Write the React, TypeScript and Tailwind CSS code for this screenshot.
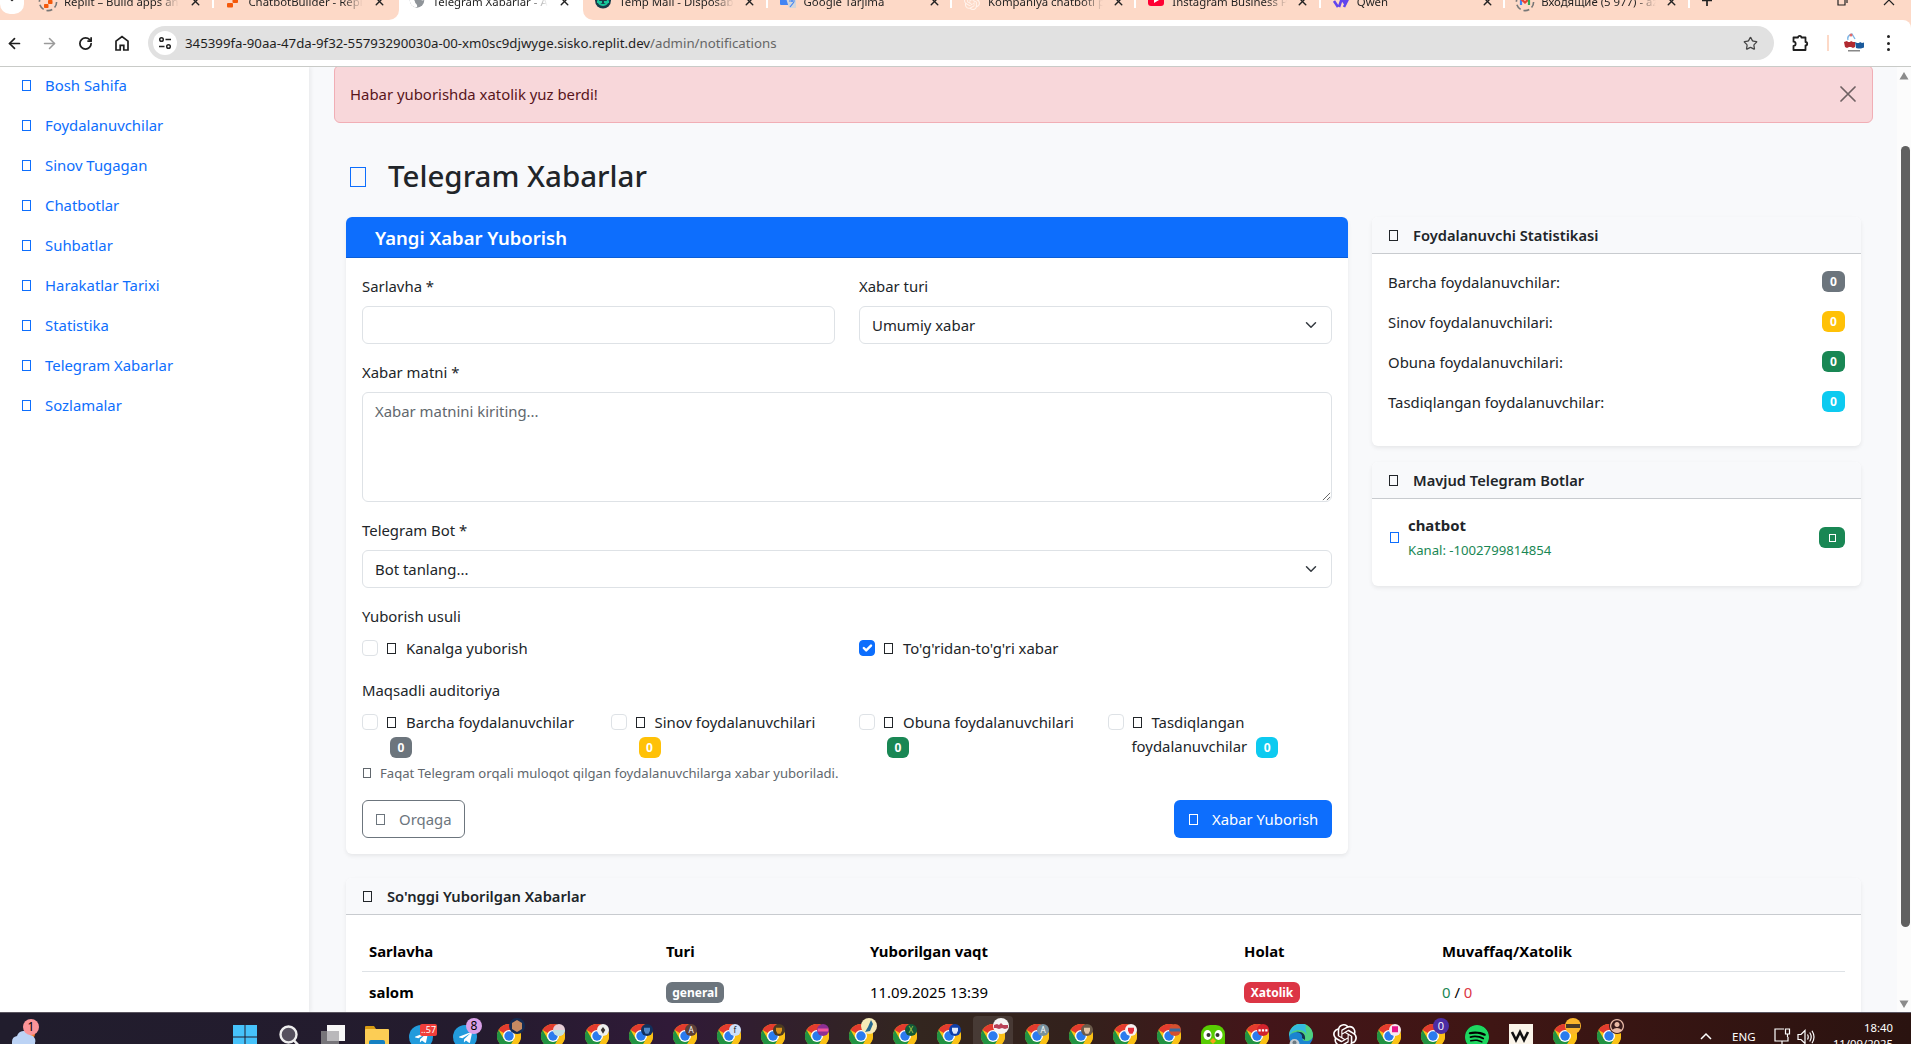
import React from 'react';
import { ArrowLeft, ArrowRight, Star, ChevronDown, RotateCw, X } from 'lucide-react';
import { SiOpenai, SiSpotify } from 'react-icons/si';
import { FaTelegramPlane } from 'react-icons/fa';

/* ---------- small shared pieces ---------- */

function Glyph({ className = '' }: { className?: string }) {
  return <span className={`inline-block h-[11px] w-[9px] shrink-0 border border-current ${className}`} />;
}

function Badge({ className = '', children }: { className?: string; children: React.ReactNode }) {
  return (
    <span
      className={`inline-flex h-[21px] items-center justify-center rounded-[6px] pt-[1px] text-[12px] leading-[12px] font-bold text-white ${className}`}
    >
      {children}
    </span>
  );
}

/* ---------- browser chrome ---------- */

function Ring({ children, color = '#777' }: { children?: React.ReactNode; color?: string }) {
  return (
    <svg viewBox="0 0 20 20" className="h-5 w-5 shrink-0">
      <circle cx="10" cy="10" r="8.6" fill="none" stroke={color} strokeWidth="1.6" strokeDasharray="6 3" />
      {children}
    </svg>
  );
}

const replitMark = (
  <g fill="#f4590b">
    <rect x="6" y="4" width="4.5" height="4" rx="0.8" />
    <rect x="10" y="8" width="4.5" height="4" rx="0.8" />
    <rect x="6" y="12" width="4.5" height="4" rx="0.8" />
  </g>
);

const favicons: Record<string, React.ReactNode> = {
  replitRing: <Ring>{replitMark}</Ring>,
  replit: (
    <svg viewBox="0 0 20 20" className="h-5 w-5">
      <g fill="#f4590b">
        <rect x="5" y="2" width="6" height="4.500" rx="1" />
        <rect x="10.500" y="6.500" width="5.500" height="4.500" rx="1" />
        <rect x="5" y="11" width="6" height="4.500" rx="1" />
      </g>
    </svg>
  ),
  globe: (
    <svg viewBox="0 0 20 20" className="h-5 w-5">
      <circle cx="10" cy="8.500" r="7.2" fill="#8f9499" />
      <path d="M3 7c3 0 5 1 5 3s3 2 2 5c-4 1-8-3-7-8zM11 2c3 0 6 3 6 6-2 1-3 0-4-1s-3-2-2-5z" fill="#fff" />
    </svg>
  ),
  temp: (
    <svg viewBox="0 0 20 20" className="h-5 w-5">
      <circle cx="10" cy="8.500" r="8" fill="#173c4a" />
      <path d="M5 6c0 5 2 7 5 7s5-2 5-7M4 10h5M11 10h5" fill="none" stroke="#17c79a" strokeWidth="1.8" />
    </svg>
  ),
  translate: (
    <svg viewBox="0 0 20 20" className="h-5 w-5">
      <rect x="2" y="0" width="11" height="13" rx="1" fill="#4285f4" />
      <path d="M8 6h10v10h-7z" fill="#d2d6dc" />
      <path d="M11 9h6M14 8v2M12 15l4-5" stroke="#4285f4" strokeWidth="1.2" />
    </svg>
  ),
  gpt: <SiOpenai className="h-4 w-4 text-[#fff3ec]" />,
  youtube: (
    <svg viewBox="0 0 20 20" className="h-5 w-5">
      <rect x="2" y="2" width="16" height="12" rx="3" fill="#ff0033" />
      <path d="M8 5l5 3-5 3z" fill="#fff" />
    </svg>
  ),
  qwen: (
    <svg viewBox="0 0 20 20" className="h-5 w-5">
      <path d="M4 5h6l3 5 4-3M3 9l4 6M8 15l2-6h6l-3 6" fill="none" stroke="#6045ee" strokeWidth="2.6" />
    </svg>
  ),
  gmail: (
    <Ring>
      <path d="M6 13V6.500" stroke="#4285f4" strokeWidth="2.2" />
      <path d="M6 7l4 3.500L14 7" fill="none" stroke="#ea4335" strokeWidth="2.2" />
      <path d="M14 13V6.500" stroke="#34a853" strokeWidth="2.2" />
    </Ring>
  ),
};

const tabs = [
  { icon: 'replitRing', title: 'Replit – Build apps and sites' },
  { icon: 'replit', title: 'ChatbotBuilder - Replit' },
  { icon: 'globe', title: 'Telegram Xabarlar - Admin', active: true },
  { icon: 'temp', title: 'Temp Mail - Disposable' },
  { icon: 'translate', title: 'Google Tarjima' },
  { icon: 'gpt', title: 'Kompaniya chatboti pro' },
  { icon: 'youtube', title: 'Instagram Business Page' },
  { icon: 'qwen', title: 'Qwen' },
  { icon: 'gmail', title: 'Входящие (5 977) - az@g' },
];

function TabStrip() {
  return (
    <div className="flex h-5 shrink-0 overflow-hidden bg-white">
      <div className="flex h-5 w-[30px] shrink-0 items-start bg-[#fdd9c7]">
        <div className="flex h-[14px] w-[24px] justify-center rounded-b-[10px] bg-white">
          <ChevronDown className="-mt-[7px] h-[12px] w-[12px] text-[#222]" strokeWidth={3} />
        </div>
      </div>
      {tabs.map((t, i) => (
        <div
          key={t.title}
          className={`h-5 w-[184.400px] shrink-0 ${
            t.active ? 'bg-white' : i === 1 ? 'rounded-br-[10px] bg-[#fdd9c7]' : i === 3 ? 'rounded-bl-[10px] bg-[#fdd9c7]' : 'bg-[#fdd9c7]'
          }`}
        >
          <div className="-mt-[8px] flex h-5 items-center">
            <span className={`flex h-5 w-5 items-center justify-center ${i > 2 ? 'ml-[10px]' : 'ml-[8px]'}`}>
              {favicons[t.icon]}
            </span>
            <span className="ml-[6px] w-[115px] overflow-hidden bg-[linear-gradient(90deg,#1f1f1f_82%,transparent)] bg-clip-text text-[11.400px] leading-5 whitespace-nowrap text-transparent">
              {t.title}
            </span>
            <X
              className={`-mt-[1px] h-[13px] w-[13px] text-[#222] ${i > 2 ? 'ml-[9px]' : 'ml-[10px]'}`}
              strokeWidth={2.6}
            />
            <span className={`ml-auto h-[12px] w-[2px] ${i === 1 || i === 2 ? 'bg-transparent' : 'bg-white'}`} />
          </div>
        </div>
      ))}
      <div className="flex h-5 flex-1 items-start justify-between bg-[#fdd9c7]">
        <svg viewBox="0 0 12 12" className="-mt-[5px] ml-[11px] h-3 w-3">
          <path d="M6 0v11M1 5.500h10" stroke="#222" strokeWidth="1.700" />
        </svg>
        <div className="flex">
          <svg viewBox="0 0 12 12" className="-mt-[6px] mr-[35px] h-3 w-3">
            <path d="M2 2h7v9H2zM4 1h7v8" fill="none" stroke="#222" strokeWidth="1.200" />
          </svg>
          <svg viewBox="0 0 12 12" className="-mt-[6px] mr-[16px] h-3 w-3">
            <path d="M1 1l10 10M11 1L1 11" stroke="#222" strokeWidth="1.200" />
          </svg>
        </div>
      </div>
    </div>
  );
}

function Toolbar() {
  return (
    <div className="bg-[#fdd9c7]">
      <div className="flex h-[47px] items-center rounded-tr-[8px] border-b border-[#c9cbc8] bg-white">
        <ArrowLeft className="ml-[6px] h-[17px] w-[17px] text-[#1f1f1f]" strokeWidth={2.4} />
        <ArrowRight className="ml-[18px] h-[17px] w-[17px] text-[#9a9a9a]" strokeWidth={2.2} />
        <RotateCw className="ml-[20px] h-[15px] w-[15px] text-[#1f1f1f]" strokeWidth={2.8} />
        <svg viewBox="0 0 16 16" className="ml-[21px] h-[16px] w-[16px]">
          <path d="M2 6.200L8 1.500l6 4.700V15h-4.200v-4.600H6.200V15H2z" fill="none" stroke="#1f1f1f" strokeWidth="1.700" />
        </svg>
        <div className="ml-[18px] flex h-[34px] w-[1626px] items-center rounded-full bg-[#e1e1e1]">
          <span className="ml-[5px] flex h-6 w-6 items-center justify-center rounded-full bg-white">
            <svg viewBox="0 0 14 14" className="h-[14px] w-[14px]" fill="none" stroke="#222" strokeWidth="1.500">
              <circle cx="3.500" cy="3.500" r="1.800" />
              <path d="M7.500 3.500H13M1 10.500h5.500" />
              <circle cx="10.500" cy="10.500" r="1.800" />
            </svg>
          </span>
          <span className="ml-[8px] text-[13.250px] leading-5 whitespace-nowrap text-[#1f1f1f]">
            345399fa-90aa-47da-9f32-55793290030a-00-xm0sc9djwyge.sisko.replit.dev
            <span className="text-[#666]">/admin/notifications</span>
          </span>
          <Star className="mr-[16px] ml-auto h-[15px] w-[15px] text-[#444]" strokeWidth={2} />
        </div>
        <svg viewBox="0 0 18 18" className="ml-[17px] h-[18px] w-[18px]">
          <path
            d="M2.500 3.500H7a1.700 1.700 0 0 1 3.400 0H14.500V8a1.700 1.700 0 0 1 0 3.400V16H2.500v-4a2.100 2.100 0 0 0 0-4.300z"
            fill="none"
            stroke="#1f1f1f"
            strokeWidth="1.800"
            strokeLinejoin="round"
          />
        </svg>
        <span className="ml-[18px] h-[16px] w-[2px] bg-[#fdd9c7]" />
        <svg viewBox="0 0 22 22" className="ml-[14px] h-[22px] w-[22px]">
          <path d="M5 8c-1-3 1-5 4-6l3 5" fill="none" stroke="#7db7e8" strokeWidth="1.400" />
          <circle cx="8" cy="3" r="1.500" fill="#e36b6b" />
          <path d="M1 10l3-1 1 1h2l1-1 2 1h2v5l-2 1-2-1H6l-2 1-2-1z" fill="#b02a30" />
          <path d="M12 10l2 1h2l1-1 2 1 2-.5v5l-3 1h-3l-2-.5z" fill="#1b5a9c" />
          <rect x="5" y="18" width="12" height="1.500" fill="#888" />
        </svg>
        <span className="ml-[22px] flex flex-col gap-[3.500px]">
          <span className="h-[3px] w-[3px] rounded-full bg-[#222]" />
          <span className="h-[3px] w-[3px] rounded-full bg-[#222]" />
          <span className="h-[3px] w-[3px] rounded-full bg-[#222]" />
        </span>
      </div>
    </div>
  );
}

/* ---------- page ---------- */

const navItems = [
  'Bosh Sahifa',
  'Foydalanuvchilar',
  'Sinov Tugagan',
  'Chatbotlar',
  'Suhbatlar',
  'Harakatlar Tarixi',
  'Statistika',
  'Telegram Xabarlar',
  'Sozlamalar',
];

function Sidebar() {
  return (
    <nav className="z-10 w-[309px] shrink-0 bg-white shadow-[2px_0_4px_rgba(0,0,0,0.06)]">
      <ul className="-mt-[2px]">
        {navItems.map((n) => (
          <li key={n} className="flex h-10 items-center text-[#0d6efd]">
            <Glyph className="ml-[22px]" />
            <span className="ml-[14px]">{n}</span>
          </li>
        ))}
      </ul>
    </nav>
  );
}

function Select({ value }: { value: string }) {
  return (
    <div className="flex h-[38px] items-center justify-between rounded-[6px] border border-[#dee2e6] px-3">
      <span>{value}</span>
      <svg viewBox="0 0 16 16" className="h-3 w-4">
        <path d="m2 5 6 6 6-6" fill="none" stroke="#343a40" strokeWidth="2" strokeLinecap="round" strokeLinejoin="round" />
      </svg>
    </div>
  );
}

function Check({ checked, children }: { checked?: boolean; children: React.ReactNode }) {
  return (
    <div className="mb-[2px] flex items-start">
      <span
        className={`mt-1 flex h-4 w-4 shrink-0 items-center justify-center rounded-[4px] border ${
          checked ? 'border-[#0d6efd] bg-[#0d6efd]' : 'border-[#dee2e6] bg-white'
        }`}
      >
        {checked && (
          <svg viewBox="0 0 20 20" className="h-4 w-4 shrink-0">
            <path d="m6 10 3 3 6-6" fill="none" stroke="#fff" strokeWidth="3" strokeLinecap="round" strokeLinejoin="round" />
          </svg>
        )}
      </span>
      <div className="ml-2 flex h-6 items-center whitespace-nowrap">
        <Glyph className="mr-[10px] ml-[1px]" />
        {children}
      </div>
    </div>
  );
}

function Audience({ title, rest, color }: { title: string; rest?: string; color: string }) {
  return (
    <div className="mb-[2px] flex items-start">
      <span className="mt-1 h-4 w-4 shrink-0 rounded-[4px] border border-[#dee2e6]" />
      <div className="ml-2 whitespace-nowrap">
        <div className="flex h-6 items-center">
          <Glyph className="ml-[1px]" />
          <span className="ml-[10px]">{title}</span>
        </div>
        <div className="flex h-6 items-center">
          {rest && <span className="mr-[5px]">{rest}</span>}
          <Badge className={`mt-[3px] ml-1 w-[22px] ${color}`}>0</Badge>
        </div>
      </div>
    </div>
  );
}

function FormCard() {
  return (
    <section className="w-[1002px] rounded-[6px] bg-white shadow-[0_2px_4px_rgba(0,0,0,0.075)]">
      <header className="flex h-[41px] items-center rounded-t-[6px] border-b border-[#0b5ed7] bg-[#0d6efd] pt-[1px] pl-[29px] text-[18.500px] font-semibold text-white">
        Yangi Xabar Yuborish
      </header>
      <div className="p-4">
        <div className="grid grid-cols-2 gap-6">
          <div>
            <div className="mb-2">Sarlavha *</div>
            <div className="h-[38px] rounded-[6px] border border-[#dee2e6]" />
          </div>
          <div>
            <div className="mb-2">Xabar turi</div>
            <Select value="Umumiy xabar" />
          </div>
        </div>
        <div className="mt-4 mb-2">Xabar matni *</div>
        <div className="flex h-[110px] items-start justify-between rounded-[6px] border border-[#dee2e6] pl-3">
          <span className="mt-[6px] text-[#61676d]">Xabar matnini kiriting...</span>
          <svg viewBox="0 0 10 10" className="h-[9px] w-[9px] self-end">
            <path d="M1 9l8-8M5.500 9L9 5.500" stroke="#555" strokeWidth="1" />
          </svg>
        </div>
        <div className="mt-4 mb-2">Telegram Bot *</div>
        <Select value="Bot tanlang..." />
        <div className="mt-4 mb-2">Yuborish usuli</div>
        <div className="grid grid-cols-2 gap-6">
          <Check>Kanalga yuborish</Check>
          <Check checked>To'g'ridan-to'g'ri xabar</Check>
        </div>
        <div className="mt-4 mb-2">Maqsadli auditoriya</div>
        <div className="grid grid-cols-4 gap-x-6">
          <Audience title="Barcha foydalanuvchilar" color="bg-[#6c757d]" />
          <Audience title="Sinov foydalanuvchilari" color="bg-[#ffc107]" />
          <Audience title="Obuna foydalanuvchilari" color="bg-[#198754]" />
          <Audience title="Tasdiqlangan" rest="foydalanuvchilar" color="bg-[#0dcaf0]" />
        </div>
        <div className="mt-[2px] mb-[17px] flex h-[21px] items-center text-[13.100px] text-[#61676d]">
          <Glyph className="ml-[1px] h-[10px]! w-[8px]!" />
          <span className="ml-[9px]">Faqat Telegram orqali muloqot qilgan foydalanuvchilarga xabar yuboriladi.</span>
        </div>
        <div className="flex justify-between">
          <button className="flex h-[38px] w-[103px] items-center rounded-[6px] border border-[#6c757d] text-[#6c757d]">
            <Glyph className="ml-[13px]" />
            <span className="ml-[14px]">Orqaga</span>
          </button>
          <button className="flex h-[38px] w-[158px] items-center rounded-[6px] bg-[#0d6efd] text-white">
            <Glyph className="ml-[15px]" />
            <span className="ml-[14px]">Xabar Yuborish</span>
          </button>
        </div>
      </div>
    </section>
  );
}

function CardHeader({ children }: { children: React.ReactNode }) {
  return (
    <header className="flex h-[37px] items-center rounded-t-[6px] border-b border-[#c8cbcf] bg-[#f8f9fb] pl-[17px] text-[14.700px] font-semibold">
      <Glyph />
      <span className="ml-[15px]">{children}</span>
    </header>
  );
}

const stats = [
  { label: 'Barcha foydalanuvchilar:', color: 'bg-[#6c757d]' },
  { label: 'Sinov foydalanuvchilari:', color: 'bg-[#ffc107]' },
  { label: 'Obuna foydalanuvchilari:', color: 'bg-[#198754]' },
  { label: 'Tasdiqlangan foydalanuvchilar:', color: 'bg-[#0dcaf0]' },
];

function SideCards() {
  return (
    <aside className="flex w-[489px] flex-col gap-4">
      <section className="h-[229px] rounded-[6px] bg-white shadow-[0_2px_4px_rgba(0,0,0,0.075)]">
        <CardHeader>Foydalanuvchi Statistikasi</CardHeader>
        <div className="flex flex-col gap-4 px-4 pt-4">
          {stats.map((s) => (
            <div key={s.label} className="flex h-6 items-center justify-between">
              <span>{s.label}</span>
              <Badge className={`-mt-[1px] w-[23px] ${s.color}`}>0</Badge>
            </div>
          ))}
        </div>
      </section>
      <section className="h-[124px] rounded-[6px] bg-white shadow-[0_2px_4px_rgba(0,0,0,0.075)]">
        <CardHeader>Mavjud Telegram Botlar</CardHeader>
        <div className="flex h-[79px] items-center px-4 pb-[2px]">
          <Glyph className="ml-[2px] text-[#0d6efd]" />
          <div className="ml-[9px]">
            <div className="font-bold">chatbot</div>
            <div className="pt-[1px] text-[13.150px] leading-6 text-[#198754]">Kanal: -1002799814854</div>
          </div>
          <Badge className="ml-auto w-[26px] bg-[#198754]">
            <span className="h-[8px] w-[7px] border border-white" />
          </Badge>
        </div>
      </section>
    </aside>
  );
}

function HistoryCard() {
  return (
    <section className="mt-6 h-[200px] rounded-[6px] bg-white shadow-[0_2px_4px_rgba(0,0,0,0.075)]">
      <CardHeader>So'nggi Yuborilgan Xabarlar</CardHeader>
      <div className="p-4">
        <div className="grid h-[41px] grid-cols-[297px_204px_374px_198px_1fr] items-center border-b border-[#dee2e6] pl-[7px] font-bold text-black">
          <span>Sarlavha</span>
          <span>Turi</span>
          <span>Yuborilgan vaqt</span>
          <span>Holat</span>
          <span>Muvaffaq/Xatolik</span>
        </div>
        <div className="grid h-[40px] grid-cols-[297px_204px_374px_198px_1fr] items-center pl-[7px] text-black">
          <span className="font-bold">salom</span>
          <span className="flex pt-[1px]">
            <Badge className="w-[58px] bg-[#6c757d]">general</Badge>
          </span>
          <span>11.09.2025 13:39</span>
          <span className="flex pt-[1px]">
            <Badge className="w-[56px] bg-[#dc3545]">Xatolik</Badge>
          </span>
          <span>
            <span className="text-[#198754]">0</span> / <span className="text-[#dc3545]">0</span>
          </span>
        </div>
      </div>
    </section>
  );
}

function Scrollbar() {
  return (
    <div className="flex w-[14px] shrink-0 flex-col items-end bg-[#fcfcfc]">
      <svg viewBox="0 0 10 8" className="mt-[5px] mr-[2px] h-[8px] w-[10px]">
        <path d="M5 0l4.500 7.500h-9z" fill="#8b8b8b" />
      </svg>
      <div className="mt-[66px] mr-[1px] h-[781px] w-[9px] rounded-[5px] bg-[#606060]" />
      <svg viewBox="0 0 10 8" className="mt-auto mr-[2px] mb-[4px] h-[8px] w-[10px]">
        <path d="M5 8L.5.500h9z" fill="#8b8b8b" />
      </svg>
    </div>
  );
}

/* ---------- taskbar ---------- */

function Chrome() {
  return (
    <svg viewBox="0 0 24 24" className="h-6 w-6">
      <circle cx="12" cy="12" r="12" fill="#fbc116" />
      <path d="M12 12L1.600 6A12 12 0 0 1 22.400 6z" fill="#e33b2e" />
      <path d="M1.600 6A12 12 0 0 0 12 24l5.200-9L12 12 6.800 15z" fill="#229342" />
      <path d="M12 6h10.400A12 12 0 0 1 12 24l5.200-9z" fill="#fbc116" />
      <circle cx="12" cy="12" r="6" fill="#fff" />
      <circle cx="12" cy="12" r="4.700" fill="#2b7bee" />
    </svg>
  );
}

type Overlay = { fill: string; text?: string; color?: string; big?: boolean; mark?: string; markFill?: string };

function ChromeItem({ overlay, active }: { overlay?: Overlay; active?: boolean }) {
  return (
    <div className={`relative flex h-9 w-10 justify-center rounded-t-[4px] pt-[8px] ${active ? 'bg-white/10' : ''}`}>
      <Chrome />
      {overlay && (
        <svg
          viewBox="0 0 16 16"
          className={overlay.big ? 'absolute top-[2px] left-[20px] h-4 w-4' : 'absolute top-[8px] left-[20px] h-3 w-3'}
        >
          <circle cx="8" cy="8" r="8" fill={overlay.fill} />
          {overlay.mark && <path d={overlay.mark} fill={overlay.markFill} />}
          {overlay.text && (
            <text
              x="8"
              y="12"
              textAnchor="middle"
              fontSize="11"
              fontFamily='"Open Sans", sans-serif'
              fill={overlay.color || '#fff'}
            >
              {overlay.text}
            </text>
          )}
        </svg>
      )}
    </div>
  );
}

const bird = 'M10 2l2 4-3 7-5 1 3-5z';
const face = 'M4 5h8v4l-2 4H6l-2-4z';
const stripe = 'M1 6h14v4H1z';

const firstChromes: (Overlay & { active?: boolean })[] = [
  { fill: '#152b52', big: true, mark: 'M8 2l5 3v6l-5 3-5-3V5z', markFill: '#c58a62' },
  { fill: '#e6cdd6', mark: 'M0 8h16a8 8 0 0 1-16 0z', markFill: '#bfe0e2' },
  { fill: '#efefee', mark: 'M8 4l3 4-3 5-3-5z', markFill: '#3a3230' },
  { fill: '#12305c', mark: face, markFill: '#4f86c4' },
  { fill: '#5d4037', text: 'A' },
  { fill: '#cfe0fb', text: 'f', color: '#111' },
  { fill: '#4a3a22', mark: face, markFill: '#d5901c' },
  { fill: '#8d2f93', mark: stripe, markFill: '#f0559b' },
  { fill: '#f6ebb8', big: true, mark: bird, markFill: '#256a92' },
  { fill: '#115a37', text: 'X', color: '#b5d44c' },
  { fill: '#0e3fa8', mark: face, markFill: '#dce7fa' },
  {
    fill: '#f5f5f5',
    big: true,
    mark: 'M1 7l3-1 2 1 2-2 2 2h5v3l-3 1-3-1-3 1-3-1H1z',
    markFill: '#b94258',
    active: true,
  },
  { fill: '#78909c', text: 'A' },
  { fill: '#6b5b4b', mark: face, markFill: '#e0c3a4' },
  { fill: '#f6f1f1', mark: face, markFill: '#e32e3b' },
  { fill: '#d3502f', mark: stripe, markFill: '#3a6a9c' },
];

function Taskbar() {
  return (
    <footer className="flex h-8 shrink-0 items-start overflow-hidden border-t border-[#5a5560] bg-[linear-gradient(90deg,#211d2d_0%,#241b2e_25%,#301a38_35%,#33261f_48%,#33211c_56%,#431519_66%,#3f1614_78%,#2a1310_100%)] pt-[3px] text-white">
      <div className="relative ml-[12px] h-9 w-[30px]">
        <svg viewBox="0 0 28 20" className="mt-[12px] h-5 w-7">
          <circle cx="18" cy="6" r="5" fill="#f37b26" />
          <path d="M0 14a6 6 0 0 1 5-6 7 7 0 0 1 13-1 6 6 0 0 1 5 8v5H0z" fill="#bcd3f5" />
        </svg>
        <span className="absolute top-[3px] left-[11px] flex h-4 w-4 items-center justify-center rounded-full bg-[#fb9498] text-[12px] leading-4 text-black">
          1
        </span>
      </div>
      <div className="ml-[183px] flex gap-1">
        <div className="flex h-9 w-10 justify-center pt-[9px]">
          <svg viewBox="0 0 24 24" className="h-6 w-6">
            <path d="M0 0h11.500v11.500H0zM12.500 0H24v11.500H12.500zM0 12.500h11.500V24H0zM12.500 12.500H24V24H12.500z" fill="#46c2fa" />
          </svg>
        </div>
        <div className="flex h-9 w-10 justify-center pt-[9px]">
          <svg viewBox="0 0 24 24" className="h-6 w-6">
            <circle cx="11.500" cy="9.500" r="8" fill="#55505e" stroke="#eee" strokeWidth="2.400" />
            <path d="M17 15.500l5 5.500" stroke="#eee" strokeWidth="2.600" />
          </svg>
        </div>
        <div className="flex h-9 w-10 justify-center pt-[9px]">
          <svg viewBox="0 0 24 24" className="h-6 w-6">
            <rect x="6" y="0" width="18" height="16" fill="#f7f7f7" />
            <rect x="0" y="6" width="18" height="16" fill="#77757a" />
            <rect x="6" y="6" width="12" height="10" fill="#b9b8bb" />
          </svg>
        </div>
        <div className="flex h-9 w-10 justify-center pt-[9px]">
          <svg viewBox="0 0 24 24" className="h-6 w-6">
            <path d="M0 2q0-1 1-1h8l2 3v4H0z" fill="#d89b12" />
            <rect x="0" y="4" width="24" height="18" rx="1" fill="#fccd55" />
            <rect x="4" y="15" width="16" height="8" rx="2" fill="#1580c2" />
          </svg>
        </div>
        {[0, 1].map((i) => (
          <div key={i} className="relative flex h-9 w-10 justify-center pt-[9px]">
            <span className="flex h-6 w-6 items-center justify-center rounded-full bg-[#229bdc]">
              <FaTelegramPlane className="h-[15px] w-[15px] text-white" />
            </span>
            {i === 0 ? (
              <span className="absolute top-[8px] left-[19px] h-[12px] w-[17px] rounded-[2px] bg-[#f03e3a] text-center text-[9px] leading-[12px]">
                ..57
              </span>
            ) : (
              <span className="absolute top-[2px] left-[21px] h-4 w-4 rounded-full bg-[#d9a0e8] text-center text-[12px] leading-4 text-black">
                8
              </span>
            )}
          </div>
        ))}
        {firstChromes.map((o, i) => (
          <ChromeItem key={i} overlay={o} active={o.active} />
        ))}
        <div className="flex h-9 w-10 justify-center pt-[8px]">
          <svg viewBox="0 0 24 24" className="h-6 w-6">
            <rect x="0" y="1" width="24" height="26" rx="9" fill="#58cc02" />
            <ellipse cx="6.500" cy="11" rx="4" ry="5" fill="#fff" />
            <ellipse cx="17.500" cy="11" rx="4" ry="5" fill="#fff" />
            <circle cx="7.500" cy="11" r="2" fill="#333" />
            <circle cx="16.500" cy="11" r="2" fill="#333" />
            <path d="M9 17l3-3 3 3-3 3z" fill="#f9a01b" />
          </svg>
        </div>
        <ChromeItem overlay={{ fill: '#d2222c', mark: 'M2 7h3v3H2zM6.500 7h3v3h-3zM11 7h3v3h-3z', markFill: '#fff' }} />
        <div className="flex h-9 w-10 justify-center pt-[8px]">
          <svg viewBox="0 0 24 24" className="h-6 w-6">
            <circle cx="12" cy="12" r="12" fill="#1b84d0" />
            <path d="M0 12A12 12 0 0 1 24 11c0 4-3 6-7 6-3 0-4-1-3-3 1-3-2-6-6-6-3 0-6 1-8 4z" fill="#4fd17f" />
            <path d="M0 12A12 12 0 0 1 17 1c-1 4 0 6 1 10-2-4-5-5-9-5-4 0-7 2-9 6z" fill="#34b9df" />
            <path d="M13 14c1-3-2-6-6-6 6-1 10 2 9 8z" fill="#13334f" />
            <circle cx="5.500" cy="20" r="5" fill="#c3cbd1" />
            <circle cx="5.500" cy="18.500" r="2" fill="#6d7a82" />
          </svg>
        </div>
        <div className="flex h-9 w-10 justify-center pt-[8px]">
          <SiOpenai className="h-6 w-6" />
        </div>
        <ChromeItem overlay={{ fill: '#f7e9ef', mark: 'M4 3h8v8H4z', markFill: '#e6168a' }} />
        <ChromeItem overlay={{ fill: '#4c2da3', big: true, text: '0' }} />
        <div className="flex h-9 w-10 justify-center pt-[9px]">
          <span className="flex h-6 w-6 rounded-full bg-black">
            <SiSpotify className="h-6 w-6 text-[#1ed760]" />
          </span>
        </div>
        <div className="flex h-9 w-10 justify-center pt-[8px]">
          <svg viewBox="0 0 24 24" className="h-6 w-6">
            <rect width="24" height="24" fill="#fbf5ea" />
            <path d="M3 8l4 8 4-8 4 8 4-8" fill="none" stroke="#111" strokeWidth="2.600" />
          </svg>
        </div>
        <ChromeItem overlay={{ fill: '#fbb62c', big: true, mark: stripe, markFill: '#4a3a28' }} />
        <ChromeItem
          overlay={{
            fill: '#3a1b1c',
            big: true,
            mark: 'M8 1a7 7 0 1 0 .01 0zM8 2.300a5.700 5.700 0 0 1 4.300 9.400Q11 10 8 10t-4.300 1.700A5.700 5.700 0 0 1 8 2.300zM8 4a2.500 2.500 0 1 0 .01 0z',
            markFill: '#e9b9a6',
          }}
        />
      </div>
      <svg viewBox="0 0 12 8" className="mt-[16px] ml-[71px] h-[8px] w-3">
        <path d="M1 7l5-5 5 5" fill="none" stroke="#fff" strokeWidth="1.500" />
      </svg>
      <span className="mt-[13px] ml-[20px] w-[24px] text-[11.500px] leading-4">ENG</span>
      <svg viewBox="0 0 18 18" className="mt-[12px] ml-[17px] h-[18px] w-[18px]" fill="none" stroke="#fff" strokeWidth="1.200">
        <path d="M11 1H2v12h13V9M5 17h8M9 13v4M12.500 1h4v5h-4zM14.500 6v3" />
      </svg>
      <svg viewBox="0 0 18 18" className="mt-[12px] ml-[6px] h-[18px] w-[18px]" fill="none" stroke="#fff" strokeWidth="1.200">
        <path d="M1 6.500h3l4-4v13l-4-4H1zM10.500 6.500q1.500 2.500 0 5M12.700 4.500q3 4.500 0 9M15 2.700q4 6.300 0 12.600" />
      </svg>
      <div className="mt-[4px] mr-[18px] ml-auto text-right text-[11.300px] leading-4">
        <div>18:40</div>
        <div>11/09/2025</div>
      </div>
    </footer>
  );
}

export default function App() {
  return (
    <div className="flex h-[1044px] w-[1911px] flex-col overflow-hidden bg-white font-['Noto_Sans','Open_Sans',sans-serif] text-[14.900px] leading-6 text-[#212529]">
      <TabStrip />
      <Toolbar />
      <div className="flex h-[945px] shrink-0 overflow-hidden">
        <Sidebar />
        <main className="flex-1 bg-[#f8f9fb] pl-[25px]">
          <div className="-mt-[2px] flex h-[58px] w-[1539px] items-center justify-between rounded-[6px] border border-[#f1aeb5] bg-[#f8d7da] px-[15px] text-[#58151c]">
            <span>Habar yuborishda xatolik yuz berdi!</span>
            <svg viewBox="0 0 16 16" className="mr-[1px] h-4 w-4">
              <path d="M1 1l14 14M15 1L1 15" stroke="#6f6163" strokeWidth="1.700" strokeLinecap="round" />
            </svg>
          </div>
          <div className="ml-3 w-[1515px]">
            <h2 className="mt-[33px] mb-[23px] flex h-[38px] items-center pt-[2px] text-[29.500px] font-[550]">
              <span className="mt-[2px] ml-[4px] h-[20px] w-[16px] border border-[#0d6efd]" />
              <span className="ml-[22px]">Telegram Xabarlar</span>
            </h2>
            <div className="flex justify-between">
              <FormCard />
              <SideCards />
            </div>
            <HistoryCard />
          </div>
        </main>
        <Scrollbar />
      </div>
      <Taskbar />
    </div>
  );
}
